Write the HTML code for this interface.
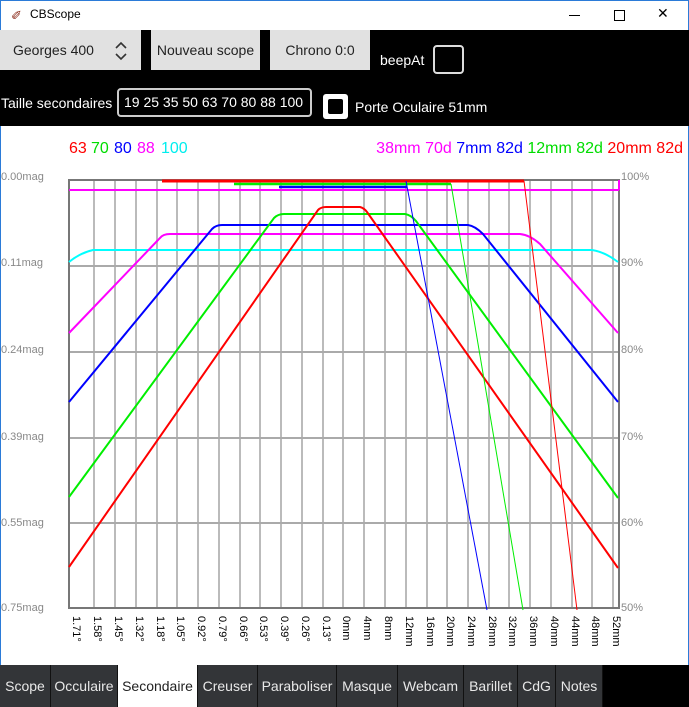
<!DOCTYPE html>
<html><head><meta charset="utf-8"><style>
*{margin:0;padding:0;box-sizing:border-box}
body{width:689px;height:707px;overflow:hidden;background:#000;font-family:"Liberation Sans",sans-serif;position:relative}
.a{position:absolute}
.btn{position:absolute;background:#e1e1e1;color:#222;font-size:14px;text-align:center;line-height:40px;top:30px;height:40px}
.t{color:#fff;font-size:14px}
.tab{position:absolute;top:665px;height:42px;background:#333538;color:#e8e8e8;font-size:14px;line-height:42px;text-align:center;border-right:1px solid #111}
</style></head><body>
<div class="a" style="left:0;top:0;width:689px;height:30px;background:#fff;border:1px solid #2b7bd8;border-bottom:none"></div>
<div class="a" style="left:11px;top:8px;font-size:13px;color:#8b2a1a">✐</div>
<div class="a" style="left:30px;top:7px;font-size:12px;color:#000">CBScope</div>
<div class="a" style="left:569px;top:15px;width:11px;height:1px;background:#000"></div>
<div class="a" style="left:614px;top:10px;width:11px;height:11px;border:1px solid #000"></div>
<div class="a" style="left:657px;top:5px;font-size:14px;color:#000">✕</div>
<div class="btn" style="left:0;width:141px;text-align:left;padding-left:13px">Georges 400</div>
<div class="a" style="left:114px;top:40px;width:14px;height:22px"><svg width="14" height="22"><path d="M2 8 L7 3 L12 8 M2 14 L7 19 L12 14" stroke="#333" stroke-width="1.6" fill="none"/></svg></div>
<div class="btn" style="left:151px;width:109px">Nouveau scope</div>
<div class="btn" style="left:270px;width:100px">Chrono 0:0</div>
<div class="a t" style="left:380px;top:52px">beepAt</div>
<div class="a" style="left:433px;top:45px;width:31px;height:29px;border:2px solid #ddd;border-radius:4px"></div>
<div class="a t" style="left:1px;top:95px">Taille secondaires</div>
<div class="a t" style="left:117px;top:88px;width:195px;height:29px;border:2px solid #ccc;border-radius:4px;padding-left:5px;line-height:25px">19 25 35 50 63 70 80 88 100</div>
<div class="a" style="left:323px;top:94px;width:25px;height:25px;background:#fff;border-radius:3px"><div class="a" style="left:5px;top:5px;width:15px;height:15px;background:#000;border-radius:2px"></div></div>
<div class="a t" style="left:355px;top:99px">Porte Oculaire 51mm</div>
<div class="a" style="left:0;top:126px;width:689px;height:539px;background:#fff;border-left:1px solid #2b7bd8;border-right:1px solid #2b7bd8"></div>
<svg class="a" style="left:0;top:0" width="689" height="707" font-family="Liberation Sans,sans-serif">
<g font-size="16"><text x="69" y="153" fill="#f00">63</text><text x="91" y="153" fill="#0d0">70</text><text x="114" y="153" fill="#00f">80</text><text x="137" y="153" fill="#f0f">88</text><text x="161" y="153" fill="#0ee">100</text></g>
<text x="683" y="153" font-size="16" text-anchor="end"><tspan fill="#f0f">38mm 70d </tspan><tspan fill="#00f">7mm 82d </tspan><tspan fill="#0d0">12mm 82d </tspan><tspan fill="#f00">20mm 82d</tspan></text>
<g stroke="#bbb" stroke-width="2">
<path d="M94 180V608M115 180V608M136 180V608M157 180V608M177 180V608M198 180V608M219 180V608M240 180V608M260 180V608M281 180V608M302 180V608M323 180V608M343 180V608M364 180V608M385 180V608M406 180V608M427 180V608M447 180V608M468 180V608M489 180V608M509 180V608M530 180V608M551 180V608M572 180V608M592 180V608M613 180V608"/>
</g>
<path d="M69 266H620M69 352H620M69 438H620M69 523H620" stroke="#aaa" stroke-width="2"/>
<rect x="69" y="180" width="550" height="428" fill="none" stroke="#777" stroke-width="2"/>
<g font-size="11" fill="#888"><text x="1" y="180">0.00mag</text><text x="1" y="266">0.11mag</text><text x="1" y="353">0.24mag</text><text x="1" y="440">0.39mag</text><text x="1" y="526">0.55mag</text><text x="1" y="611">0.75mag</text>
<text x="621" y="180">100%</text><text x="621" y="266">90%</text><text x="621" y="353">80%</text><text x="621" y="440">70%</text><text x="621" y="526">60%</text><text x="621" y="611">50%</text></g>
<g fill="none" stroke-width="2">
<path d="M69 190H619M619 180V190" stroke="#f0f" stroke-width="2"/>
<path d="M162 181H524" stroke="#f00" stroke-width="3"/>
<path d="M234 184H451" stroke="#0e0" stroke-width="2.5"/>
<path d="M279 187H407" stroke="#00f" stroke-width="2.5"/>
<path d="M69 262Q80 253 93 250H592Q605 252 618 262" stroke="#0ff"/>
<path d="M69 333L160 238Q163 234 170 234H520Q530 235 540 244L618 333" stroke="#f0f"/>
<path d="M69 402L212 229Q216 225 222 225H468Q475 226 483 234L618 402" stroke="#00f"/>
<path d="M69 497L274 218Q278 214 284 214H405Q411 215 416 221L618 498" stroke="#0e0"/>
<path d="M69 567L318 210Q321 207 326 207H360Q364 208 367 212L618 568" stroke="#f00"/>
<path d="M406 181L487 610" stroke="#00f" stroke-width="1"/>
<path d="M451 184L523 610" stroke="#0e0" stroke-width="1"/>
<path d="M524 181L577 610" stroke="#f00" stroke-width="1"/>
</g>
<g font-size="11" fill="#000">
<text transform="translate(73,616) rotate(90)">1.71°</text><text transform="translate(94,616) rotate(90)">1.58°</text><text transform="translate(115,616) rotate(90)">1.45°</text><text transform="translate(136,616) rotate(90)">1.32°</text><text transform="translate(157,616) rotate(90)">1.18°</text><text transform="translate(177,616) rotate(90)">1.05°</text><text transform="translate(198,616) rotate(90)">0.92°</text><text transform="translate(219,616) rotate(90)">0.79°</text><text transform="translate(240,616) rotate(90)">0.66°</text><text transform="translate(260,616) rotate(90)">0.53°</text><text transform="translate(281,616) rotate(90)">0.39°</text><text transform="translate(302,616) rotate(90)">0.26°</text><text transform="translate(323,616) rotate(90)">0.13°</text><text transform="translate(343,616) rotate(90)">0mm</text><text transform="translate(364,616) rotate(90)">4mm</text><text transform="translate(385,616) rotate(90)">8mm</text><text transform="translate(406,616) rotate(90)">12mm</text><text transform="translate(427,616) rotate(90)">16mm</text><text transform="translate(447,616) rotate(90)">20mm</text><text transform="translate(468,616) rotate(90)">24mm</text><text transform="translate(489,616) rotate(90)">28mm</text><text transform="translate(509,616) rotate(90)">32mm</text><text transform="translate(530,616) rotate(90)">36mm</text><text transform="translate(551,616) rotate(90)">40mm</text><text transform="translate(572,616) rotate(90)">44mm</text><text transform="translate(592,616) rotate(90)">48mm</text><text transform="translate(613,616) rotate(90)">52mm</text>
</g>
</svg>
<div class="tab" style="left:0;width:51px">Scope</div>
<div class="tab" style="left:51px;width:67px">Occulaire</div>
<div class="tab" style="left:118px;width:80px;background:#fff;color:#222">Secondaire</div>
<div class="tab" style="left:198px;width:60px">Creuser</div>
<div class="tab" style="left:258px;width:79px">Paraboliser</div>
<div class="tab" style="left:337px;width:61px">Masque</div>
<div class="tab" style="left:398px;width:66px">Webcam</div>
<div class="tab" style="left:464px;width:54px">Barillet</div>
<div class="tab" style="left:518px;width:38px">CdG</div>
<div class="tab" style="left:556px;width:47px">Notes</div>
</body></html>
